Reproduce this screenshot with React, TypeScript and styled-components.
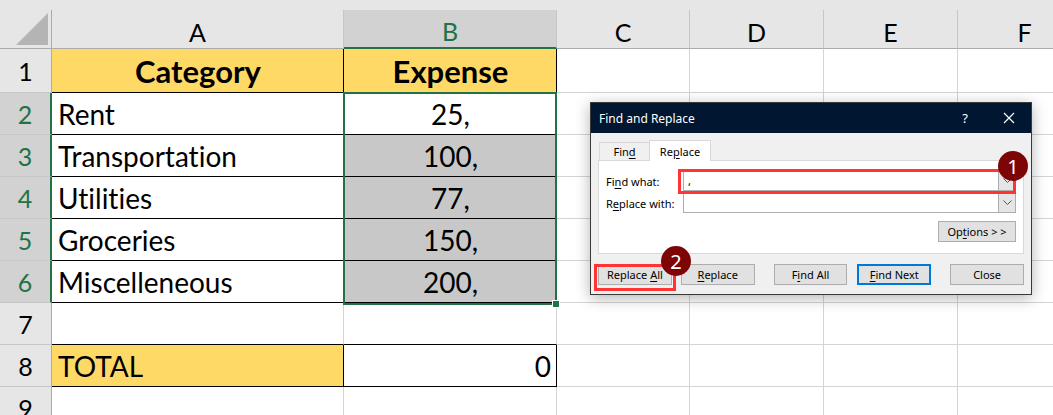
import React from "react";
import styled, { createGlobalStyle } from "styled-components";

const GREEN = "#217346";
const GRID = "#d4d4d4";
const INK = "#000";

const GlobalStyle = createGlobalStyle`
  html, body {
    margin: 0;
    padding: 0;
    background: #fff;
  }
  body {
    width: 1053px;
    height: 415px;
    overflow: hidden;
    font-family: Lato, "Liberation Sans", sans-serif;
    font-variant-ligatures: none;
  }
`;

const Page = styled.div`
  position: relative;
  width: 1053px;
  height: 415px;
  overflow: hidden;
  box-sizing: border-box;
  padding-top: 10px;
  background: #e6e6e6;
`;

const Sheet = styled.div`
  display: grid;
  grid-template-columns: 52px 292px 213px 133px 134px 134px 134px;
  grid-template-rows: 39px 44px repeat(8, 42px);
  background: #fff;
`;

const Corner = styled.div`
  grid-column: 1;
  grid-row: 1;
  box-sizing: border-box;
  display: flex;
  align-items: flex-end;
  justify-content: flex-end;
  padding: 0 3px 3px 0;
  background: #e6e6e6;
  border-right: 1px solid #ababab;
  border-bottom: 1px solid #ababab;
`;

const CornerTriangle = styled.div`
  width: 32px;
  height: 32px;
  background: #b4b4b4;
  clip-path: polygon(100% 0, 100% 100%, 0 100%);
`;

const ColHead = styled.div<{ $active?: boolean; $col: number }>`
  grid-column: ${(p) => p.$col};
  grid-row: 1;
  box-sizing: border-box;
  display: flex;
  align-items: center;
  justify-content: center;
  padding-top: 5px;
  font-size: 25px;
  background: ${(p) => (p.$active ? "#d2d2d2" : "#e6e6e6")};
  color: ${(p) => (p.$active ? GREEN : INK)};
  border-right: 1px solid #c6c6c6;
  border-bottom: ${(p) => (p.$active ? `2px solid ${GREEN}` : "1px solid #ababab")};
`;

const RowHead = styled.div<{ $active?: boolean; $row: number }>`
  grid-column: 1;
  grid-row: ${(p) => p.$row};
  box-sizing: border-box;
  display: flex;
  align-items: center;
  justify-content: center;
  font-size: 25px;
  background: ${(p) => (p.$active ? "#d2d2d2" : "#e6e6e6")};
  color: ${(p) => (p.$active ? GREEN : INK)};
  border-right: ${(p) => (p.$active ? `2px solid ${GREEN}` : "1px solid #ababab")};
  border-bottom: 1px solid #c6c6c6;
`;

type Align = "left" | "center" | "right";

const Cell = styled.div<{
  $row: number;
  $col: number;
  $fill?: string;
  $bold?: boolean;
  $align?: Align;
  $r?: string;
  $b?: string;
}>`
  grid-column: ${(p) => p.$col};
  grid-row: ${(p) => p.$row};
  box-sizing: border-box;
  display: flex;
  align-items: center;
  justify-content: ${(p) =>
    p.$align === "center" ? "center" : p.$align === "right" ? "flex-end" : "flex-start"};
  padding: 0 5px 0 6px;
  white-space: nowrap;
  font-size: ${(p) => (p.$bold ? 31 : 28)}px;
  font-weight: ${(p) => (p.$bold ? 700 : 400)};
  color: ${INK};
  background: ${(p) => p.$fill || "#fff"};
  border-right: 1px solid ${(p) => p.$r || GRID};
  border-bottom: 1px solid ${(p) => p.$b || GRID};
`;

const Selection = styled.div`
  grid-column: 3;
  grid-row: 3 / 8;
  position: relative;
  margin: -1px 0 -2px -1px;
  border: 2px solid ${GREEN};
  pointer-events: none;
`;

const FillHandle = styled.div`
  position: absolute;
  right: -5px;
  bottom: -5px;
  width: 6px;
  height: 6px;
  background: ${GREEN};
  border: 1px solid #fff;
`;

/* ---------- dialog ---------- */

const Dialog = styled.div`
  position: absolute;
  left: 590px;
  top: 102px;
  width: 442px;
  height: 193px;
  box-sizing: border-box;
  display: flex;
  flex-direction: column;
  background: #f0f0f0;
  border: 1px solid #3a3a3a;
  box-shadow: 0 3px 14px rgba(0, 0, 0, 0.3);
  font-family: "Noto Sans", "Liberation Sans", sans-serif;
  font-size: 11px;
  color: #000;
`;

const TitleBar = styled.div`
  height: 30px;
  display: flex;
  align-items: center;
  background: #011631;
  color: #fff;
  font-size: 12px;
`;

const TitleText = styled.div`
  flex: 1;
  padding-left: 8px;
`;

const TitleButton = styled.div`
  width: 44px;
  height: 30px;
  display: flex;
  align-items: center;
  justify-content: center;
  font-size: 13px;
`;

const Body = styled.div`
  flex: 1;
  display: flex;
  flex-direction: column;
  padding: 7px 7px 0;
`;

const TabRow = styled.div`
  display: flex;
  align-items: flex-end;
  height: 21px;
  padding-left: 1px;
  margin-bottom: -1px;
  position: relative;
  z-index: 1;
`;

const Tab = styled.div<{ $active?: boolean; $w: number }>`
  box-sizing: border-box;
  width: ${(p) => p.$w}px;
  height: ${(p) => (p.$active ? 21 : 19)}px;
  display: flex;
  align-items: center;
  justify-content: center;
  background: ${(p) => (p.$active ? "#fff" : "#f0f0f0")};
  border: 1px solid #d9d9d9;
  border-bottom: ${(p) => (p.$active ? "none" : "1px solid #d9d9d9")};
  margin-right: -1px;
`;

const Panel = styled.div`
  box-sizing: border-box;
  height: 94px;
  padding: 10px 7px 0;
  background: #fff;
  border: 1px solid #d9d9d9;
`;

const FieldRow = styled.div`
  display: grid;
  grid-template-columns: 77px 1fr;
  align-items: center;
  height: 20px;
  margin-bottom: 2px;
`;

const Combo = styled.div`
  box-sizing: border-box;
  height: 20px;
  display: flex;
  background: #fff;
  border: 1px solid #adadad;
`;

const ComboText = styled.div`
  flex: 1;
  padding-left: 4px;
  line-height: 18px;
`;

const DropButton = styled.div`
  box-sizing: border-box;
  width: 17px;
  display: flex;
  align-items: center;
  justify-content: center;
  background: #e5e5e5;
  border-left: 1px solid #adadad;
`;

const OptionsRow = styled.div`
  display: flex;
  justify-content: flex-end;
  margin-top: 8px;
`;

const ButtonRow = styled.div`
  display: flex;
  margin-top: 10px;
`;

const Button = styled.div<{ $primary?: boolean; $w?: number; $gap?: number }>`
  box-sizing: border-box;
  width: ${(p) => p.$w || 74}px;
  height: 21px;
  margin-left: ${(p) => p.$gap || 0}px;
  display: flex;
  align-items: center;
  justify-content: center;
  background: #e1e1e1;
  border: ${(p) => (p.$primary ? "2px solid #0078d7" : "1px solid #adadad")};
`;

const Key = styled.span`
  text-decoration: underline;
  text-underline-offset: 2px;
`;

const Highlight = styled.div<{ $x: number; $y: number; $w: number; $h: number }>`
  position: absolute;
  left: ${(p) => p.$x}px;
  top: ${(p) => p.$y}px;
  width: ${(p) => p.$w}px;
  height: ${(p) => p.$h}px;
  box-sizing: border-box;
  border: 3px solid #ff3535;
  pointer-events: none;
`;

const Badge = styled.div<{ $x: number; $y: number }>`
  position: absolute;
  left: ${(p) => p.$x}px;
  top: ${(p) => p.$y}px;
  width: 30px;
  height: 30px;
  border-radius: 50%;
  background: #7d0505;
  color: #fff;
  display: flex;
  align-items: center;
  justify-content: center;
  font-family: "Noto Sans", sans-serif;
  font-size: 20px;
`;

const Chevron = () => (
  <svg width="9" height="6" viewBox="0 0 9 6">
    <polyline points="0.5,0.5 4.5,4.5 8.5,0.5" fill="none" stroke="#555" strokeWidth="1" />
  </svg>
);

const CloseIcon = () => (
  <svg width="12" height="12" viewBox="0 0 12 12">
    <path d="M1 1 L11 11 M11 1 L1 11" stroke="#fff" strokeWidth="1.2" />
  </svg>
);

interface CellData {
  text?: string;
  fill?: string;
  bold?: boolean;
  align?: Align;
  r?: string;
  b?: string;
}

const YELLOW = "#ffd966";
const SEL = "#c8c8c8";
const boxed = { r: INK, b: INK };

const rows: CellData[][] = [
  [
    { text: "Category", fill: YELLOW, bold: true, align: "center", ...boxed },
    { text: "Expense", fill: YELLOW, bold: true, align: "center", ...boxed },
  ],
  [{ text: "Rent", ...boxed }, { text: "25,", align: "center", ...boxed }],
  [{ text: "Transportation", ...boxed }, { text: "100,", align: "center", fill: SEL, ...boxed }],
  [{ text: "Utilities", ...boxed }, { text: "77,", align: "center", fill: SEL, ...boxed }],
  [{ text: "Groceries", ...boxed }, { text: "150,", align: "center", fill: SEL, ...boxed }],
  [{ text: "Miscelleneous", ...boxed }, { text: "200,", align: "center", fill: SEL, ...boxed }],
  [{ b: INK }, { b: INK }],
  [{ text: "TOTAL", fill: YELLOW, ...boxed }, { text: "0", align: "right", ...boxed }],
  [{}, {}],
];

const columns = ["A", "B", "C", "D", "E", "F"];

export default function App() {
  return (
    <Page>
      <GlobalStyle />
      <Sheet>
        <Corner>
          <CornerTriangle />
        </Corner>
        {columns.map((c, j) => (
          <ColHead key={c} $col={j + 2} $active={c === "B"}>
            {c}
          </ColHead>
        ))}
        {rows.map((row, i) => {
          const full: CellData[] = [...row, {}, {}, {}, {}];
          return (
            <React.Fragment key={i}>
              <RowHead $row={i + 2} $active={i >= 1 && i <= 5}>
                {i + 1}
              </RowHead>
              {full.map((cell, j) => (
                <Cell
                  key={j}
                  $row={i + 2}
                  $col={j + 2}
                  $fill={cell.fill}
                  $bold={cell.bold}
                  $align={cell.align}
                  $r={cell.r}
                  $b={cell.b}
                >
                  {cell.text}
                </Cell>
              ))}
            </React.Fragment>
          );
        })}
        <Selection>
          <FillHandle />
        </Selection>
      </Sheet>

      <Dialog>
        <TitleBar>
          <TitleText>Find and Replace</TitleText>
          <TitleButton>?</TitleButton>
          <TitleButton>
            <CloseIcon />
          </TitleButton>
        </TitleBar>
        <Body>
          <TabRow>
            <Tab $w={51}>
              <span>
                Fin<Key>d</Key>
              </span>
            </Tab>
            <Tab $w={62} $active>
              <span>
                Re<Key>p</Key>lace
              </span>
            </Tab>
          </TabRow>
          <Panel>
            <FieldRow>
              <span>
                Fi<Key>n</Key>d what:
              </span>
              <Combo>
                <ComboText>,</ComboText>
                <DropButton>
                  <Chevron />
                </DropButton>
              </Combo>
            </FieldRow>
            <FieldRow>
              <span>
                R<Key>e</Key>place with:
              </span>
              <Combo>
                <ComboText />
                <DropButton>
                  <Chevron />
                </DropButton>
              </Combo>
            </FieldRow>
            <OptionsRow>
              <Button $w={78}>
                <span>
                  Op<Key>t</Key>ions &gt; &gt;
                </span>
              </Button>
            </OptionsRow>
          </Panel>
          <ButtonRow>
            <Button>
              <span>
                Replace <Key>A</Key>ll
              </span>
            </Button>
            <Button $gap={9}>
              <span>
                <Key>R</Key>eplace
              </span>
            </Button>
            <Button $gap={19}>
              <span>
                F<Key>i</Key>nd All
              </span>
            </Button>
            <Button $gap={10} $primary>
              <span>
                <Key>F</Key>ind Next
              </span>
            </Button>
            <Button $gap={19}>Close</Button>
          </ButtonRow>
        </Body>

        <Highlight $x={87} $y={66} $w={338} $h={25} />
        <Highlight $x={3} $y={161} $w={82} $h={27} />
        <Badge $x={407} $y={48}>1</Badge>
        <Badge $x={70} $y={143}>2</Badge>
      </Dialog>
    </Page>
  );
}
